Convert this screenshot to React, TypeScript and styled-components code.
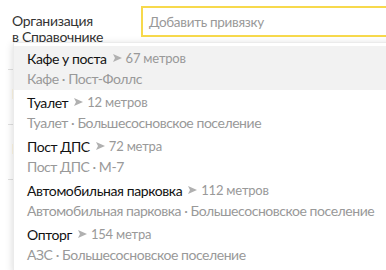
import React from "react";
import styled, { createGlobalStyle } from "styled-components";

const Global = createGlobalStyle`
  html, body { margin: 0; padding: 0; background: #fff; overflow: hidden; }
  body { font-family: Lato, "Noto Sans", "Liberation Sans", sans-serif; letter-spacing: -0.3px; }
`;

const Page = styled.div`
  position: relative;
  width: 386px;
  height: 270px;
  overflow: hidden;
  padding: 6px 0 0 12px;
  box-sizing: border-box;
`;

const FormRow = styled.div`
  display: flex;
  align-items: flex-start;
`;

const Label = styled.div`
  width: 129px;
  flex: none;
  padding-top: 7px;
  font-size: 14px;
  line-height: 16px;
  color: #333;
`;

const Input = styled.div`
  flex: none;
  width: 270px;
  height: 31px;
  box-sizing: border-box;
  border: 2px solid #f7d94c;
  padding: 0 6px;
  display: flex;
  align-items: center;
  font-size: 13.5px;
  color: #999;
`;

const BgSection = styled.div`
  display: flex;
  flex-direction: column;
  margin-top: 24px;
`;

const BgDivider = styled.div`
  height: 1px;
  background: #e0e0e0;
  margin-left: -4px;
  width: 370px;
`;

const BgText = styled.div`
  font-size: 14px;
  line-height: 18px;
  color: #333;
  padding: 15px 0 21px;
`;

const Dropdown = styled.div`
  position: absolute;
  left: 13px;
  top: 42px;
  width: 400px;
  background: #fff;
  border: 1px solid rgba(0, 0, 0, 0.08);
  box-shadow: 0 2px 8px rgba(0, 0, 0, 0.16);
  padding: 3px 0 4px;
  display: flex;
  flex-direction: column;
`;

const Item = styled.div<{ $active?: boolean }>`
  height: 44px;
  box-sizing: border-box;
  padding: 3px 0 0 13px;
  background: ${(p) => (p.$active ? "#f2f2f2" : "transparent")};
  display: flex;
  flex-direction: column;
  gap: 3px;
`;

const TitleLine = styled.div`
  display: flex;
  align-items: center;
  height: 18px;
  white-space: nowrap;
`;

const Title = styled.span`
  font-size: 14px;
  letter-spacing: -0.4px;
  color: #111;
`;

const Distance = styled.span`
  display: inline-flex;
  align-items: center;
  margin-left: 6px;
  font-size: 13px;
  letter-spacing: -0.2px;
  color: #999;
  gap: 4px;
`;

const Sub = styled.div`
  height: 18px;
  line-height: 18px;
  font-size: 14px;
  letter-spacing: -0.45px;
  color: #999;
  white-space: nowrap;
`;

const Arrow = () => (
  <svg width="9" height="8" viewBox="0 0 9 8">
    <path d="M0 0 L9 4 L0 8 L2 4 Z" fill="#b0b0b0" />
  </svg>
);

const items = [
  { title: "Кафе у поста", dist: "67 метров", sub: "Кафе · Пост-Фоллс", active: true },
  { title: "Туалет", dist: "12 метров", sub: "Туалет · Большесосновское поселение" },
  { title: "Пост ДПС", dist: "72 метра", sub: "Пост ДПС · М-7" },
  {
    title: "Автомобильная парковка",
    dist: "112 метров",
    sub: "Автомобильная парковка · Большесосновское поселение",
  },
  { title: "Опторг", dist: "154 метра", sub: "АЗС · Большесосновское поселение" },
];

export default function App() {
  return (
    <Page>
      <Global />
      <FormRow>
        <Label>
          Организация
          <br />в Справочнике
        </Label>
        <Input>Добавить привязку</Input>
      </FormRow>
      <BgSection>
        <BgDivider />
        <BgText>Рубрика</BgText>
        <BgDivider />
        <BgText>Режим работы</BgText>
        <BgDivider />
      </BgSection>
      <Dropdown>
        {items.map((it) => (
          <Item key={it.title} $active={it.active}>
            <TitleLine>
              <Title>{it.title}</Title>
              <Distance>
                <Arrow />
                {it.dist}
              </Distance>
            </TitleLine>
            <Sub>{it.sub}</Sub>
          </Item>
        ))}
      </Dropdown>
    </Page>
  );
}
